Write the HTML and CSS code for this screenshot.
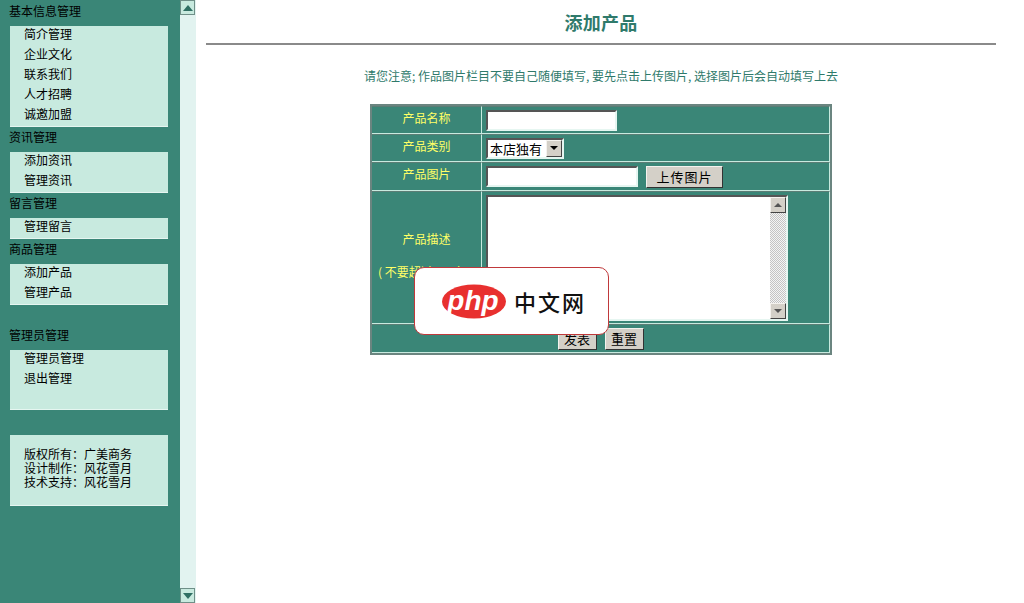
FILE: index.html
```html
<!DOCTYPE html>
<html lang="zh-CN">
<head>
  <meta charset="UTF-8">
  <title>添加产品</title>
  <link rel="stylesheet" href="styles.css">
</head>
<body>
  <div class="page">
    <!-- 左侧菜单 -->
    <div class="side">
      <div class="menu-title">基本信息管理</div>
      <ul class="menu-box">
        <li>简介管理</li>
        <li>企业文化</li>
        <li>联系我们</li>
        <li>人才招聘</li>
        <li>诚邀加盟</li>
      </ul>
      <div class="menu-title">资讯管理</div>
      <ul class="menu-box">
        <li>添加资讯</li>
        <li>管理资讯</li>
      </ul>
      <div class="menu-title">留言管理</div>
      <ul class="menu-box">
        <li>管理留言</li>
      </ul>
      <div class="menu-title">商品管理</div>
      <ul class="menu-box">
        <li>添加产品</li>
        <li>管理产品</li>
      </ul>
      <div class="menu-title menu-title-gap">管理员管理</div>
      <ul class="menu-box menu-box-tall">
        <li>管理员管理</li>
        <li>退出管理</li>
      </ul>
      <div class="copy-box">
        <p>版权所有：广美商务</p>
        <p>设计制作：风花雪月</p>
        <p>技术支持：风花雪月</p>
      </div>
    </div>

    <!-- 左侧框架的滚动条 -->
    <div class="side-scroll">
      <div class="side-btn"><svg width="10" height="6" viewBox="0 0 10 6"><path d="M5 0L10 6H0Z" fill="#2f6f63"/></svg></div>
      <div class="side-btn"><svg width="10" height="6" viewBox="0 0 10 6"><path d="M0 0H10L5 6Z" fill="#2f6f63"/></svg></div>
    </div>

    <!-- 主内容 -->
    <div class="main">
      <h1>添加产品</h1>
      <hr class="title-line">
      <p class="notice">请您注意; 作品图片栏目不要自己随便填写, 要先点击上传图片, 选择图片后会自动填写上去</p>

      <table class="form-table">
        <tr class="row-name">
          <td class="label">产品名称</td>
          <td><input class="text-input input-name" type="text"></td>
        </tr>
        <tr class="row-type">
          <td class="label">产品类别</td>
          <td>
            <div class="select">
              <span class="select-value">本店独有</span>
              <span class="select-btn"><svg width="8" height="4" viewBox="0 0 8 4"><path d="M0 0H8L4 4Z" fill="#000"/></svg></span>
            </div>
          </td>
        </tr>
        <tr class="row-pic">
          <td class="label">产品图片</td>
          <td>
            <div class="pic-line">
              <input class="text-input input-pic" type="text">
              <button class="btn btn-upload" type="button">上传图片</button>
            </div>
          </td>
        </tr>
        <tr class="row-desc">
          <td class="label label-desc">
            <p>产品描述</p>
            <p class="label-note">( 不要超过500字 )</p>
          </td>
          <td>
            <div class="textarea-wrap">
              <textarea class="textarea"></textarea>
              <div class="ta-scroll">
                <div class="ta-btn"><svg width="8" height="4" viewBox="0 0 8 4"><path d="M4 0L8 4H0Z" fill="#555"/></svg></div>
                <div class="ta-btn"><svg width="8" height="4" viewBox="0 0 8 4"><path d="M0 0H8L4 4Z" fill="#555"/></svg></div>
              </div>
            </div>
          </td>
        </tr>
        <tr class="row-submit">
          <td colspan="2">
            <div class="submit-line">
              <button class="btn btn-small" type="button">发表</button>
              <button class="btn btn-small" type="button">重置</button>
            </div>
          </td>
        </tr>
      </table>
    </div>
  </div>

  <!-- 水印 -->
  <div class="logo-badge">
    <svg class="logo-php" width="64" height="35" viewBox="0 0 64 35">
      <ellipse cx="32" cy="17.5" rx="32" ry="17" fill="#e8302f"/>
      <text x="31" y="26" text-anchor="middle" class="logo-php-text">php</text>
    </svg>
    <span class="logo-cn">中文网</span>
  </div>
</body>
</html>
```

FILE: styles.css
```css
/* リセット */
* {
  margin: 0;
  padding: 0;
  box-sizing: border-box;
}
html, body {
  height: 603px;
  overflow: hidden;
}
body {
  font-family: "Noto Sans CJK SC", "Liberation Sans", sans-serif;
  font-size: 12px;
  background-color: #fff;
  color: #000;
  position: relative;
}
.page {
  display: flex;
  height: 603px;
}

/* 左侧菜单 */
.side {
  width: 180px;
  flex-shrink: 0;
  background-color: #3a8677;
  padding: 1px 12px 0 10px;
}
.menu-title {
  height: 25px;
  line-height: 20px;
  margin-left: -1px;
  color: #000;
}
.menu-title-gap {
  margin-top: 20px;
}
.menu-box {
  list-style: none;
  background-color: #c8eadf;
  border-bottom: 1px solid #e6f6f1;
  padding-left: 14px;
}
.menu-box li {
  height: 20px;
  line-height: 16px;
}
.menu-box-tall {
  height: 60px;
}
.copy-box {
  height: 71px;
  margin-top: 25px;
  padding: 12px 0 0 14px;
  background-color: #c8eadf;
  border-bottom: 1px solid #e6f6f1;
  line-height: 14px;
}

/* 左侧滚动条 */
.side-scroll {
  width: 16px;
  flex-shrink: 0;
  background-color: #e2f3f0;
  display: flex;
  flex-direction: column;
  justify-content: space-between;
}
.side-btn {
  width: 15px;
  height: 15px;
  background-color: #c8eadf;
  border: 1px solid #6f8f88;
  display: flex;
  align-items: center;
  justify-content: center;
}

/* 主内容 */
.main {
  flex: 1;
  padding: 0 28px 0 10px;
}
.main h1 {
  font-size: 18px;
  font-weight: bold;
  letter-spacing: 0.3px;
  line-height: 24px;
  padding-top: 10px;
  height: 43px;
  text-align: center;
  color: #2f7a6b;
}
.title-line {
  border: none;
  height: 2px;
  background-color: #8a8a8a;
}
.notice {
  margin-top: 22px;
  line-height: 18px;
  text-align: center;
  color: #2f7a6b;
}

/* 表单 */
.form-table {
  width: 462px;
  margin: 19px auto 0;
  border-collapse: separate;
  border-spacing: 0;
  background-color: #3a8677;
  border: 2px solid #6b8580;
}
.form-table td {
  border-right: 1px solid #c8eadf;
  border-bottom: 1px solid #c8eadf;
  border-top: 1px solid #5b7d75;
  padding: 0 4px;
  vertical-align: middle;
}
.form-table .label {
  width: 110px;
  padding: 0 0 6px;
  text-align: center;
  color: #ffff66;
}
.row-name td,
.row-type td {
  height: 28px;
}
.row-pic td {
  height: 29px;
}
.row-desc td {
  height: 133px;
}
.row-submit td {
  height: 29px;
}
.label-note {
  margin-top: 16px;
  text-align: left;
  padding-left: 6px;
}

.text-input {
  display: block;
  height: 21px;
  background-color: #fff;
  border: 2px solid;
  border-color: #555 #e6f6f1 #e6f6f1 #555;
  outline: none;
}
.input-name {
  width: 131px;
}
.input-pic {
  width: 152px;
}
.pic-line {
  display: flex;
  align-items: center;
  gap: 8px;
}
.select {
  width: 78px;
  height: 21px;
  display: flex;
  align-items: center;
  justify-content: space-between;
  background-color: #fff;
  border: 2px solid;
  border-color: #555 #e6f6f1 #e6f6f1 #555;
}
.select-value {
  font-size: 13px;
  padding-left: 2px;
}
.select-btn {
  width: 16px;
  height: 17px;
  display: flex;
  align-items: center;
  justify-content: center;
  background-color: #d4d0c8;
  border: 1px solid;
  border-color: #f4f2ee #444 #444 #f4f2ee;
}
.btn {
  font-family: inherit;
  font-size: 13px;
  height: 22px;
  line-height: 18px;
  color: #000;
  background-color: #d4d0c8;
  border: 1px solid;
  border-color: #f4f2ee #333 #333 #f4f2ee;
}
.btn-upload {
  width: 77px;
  letter-spacing: 1px;
}
.btn-small {
  width: 39px;
}
.textarea-wrap {
  width: 302px;
  height: 126px;
  display: flex;
  background-color: #fff;
  border: 2px solid;
  border-color: #555 #e6f6f1 #e6f6f1 #555;
}
.textarea {
  flex: 1;
  border: none;
  outline: none;
  resize: none;
  overflow: hidden;
}
.ta-scroll {
  width: 16px;
  display: flex;
  flex-direction: column;
  justify-content: space-between;
  background-color: #d8d8d8;
  background-image: repeating-conic-gradient(#c4c4c4 0% 25%, #f4f4f4 0% 50%);
  background-size: 2px 2px;
}
.ta-btn {
  height: 16px;
  display: flex;
  align-items: center;
  justify-content: center;
  background-color: #d4d0c8;
  border: 1px solid;
  border-color: #f4f2ee #444 #444 #f4f2ee;
}
.submit-line {
  display: flex;
  justify-content: center;
  gap: 8px;
}

/* 水印 */
.logo-badge {
  position: absolute;
  left: 414px;
  top: 267px;
  width: 195px;
  height: 68px;
  display: flex;
  align-items: center;
  padding-left: 27px;
  background-color: #fff;
  border: 1px solid #c0393b;
  border-radius: 10px;
}
.logo-php-text {
  font-family: "Liberation Sans", sans-serif;
  font-size: 28px;
  font-style: italic;
  font-weight: bold;
  fill: #fff;
}
.logo-cn {
  margin-left: 8px;
  font-size: 22px;
  font-weight: 500;
  line-height: 1;
  letter-spacing: 2px;
  color: #111;
}
```
